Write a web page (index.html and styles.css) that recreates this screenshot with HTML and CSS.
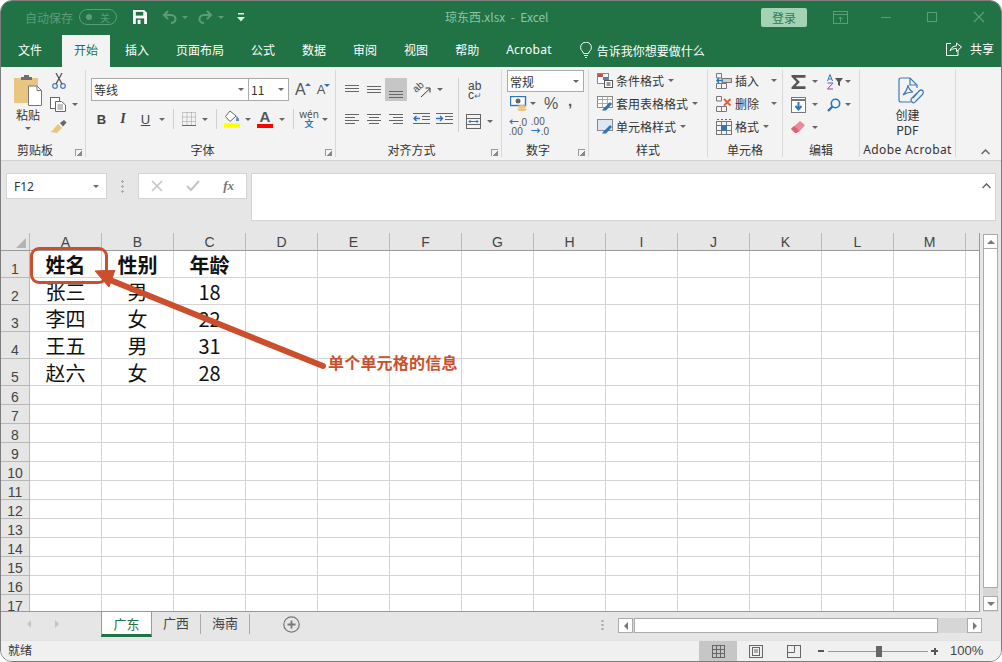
FILE: index.html
```html
<!DOCTYPE html>
<html lang="zh-CN">
<head>
    <meta charset="UTF-8">
    <meta name="viewport" content="width=device-width, initial-scale=1.0">
    <title>琼东西.xlsx - Excel</title>
    <link rel="stylesheet" href="styles.css">
</head>
<body>
    <div class="window">
        <!-- 标题栏 -->
        <div class="titlebar">
            <div class="autosave">自动保存</div>
            <div class="toggle"><span class="toggle-dot"></span><span>关</span></div>
            <svg class="qa-save" width="14" height="14" viewBox="0 0 15 15"><path d="M0 0H12L15 3V15H0Z" fill="#fff"/><rect x="3" y="2" width="8" height="4" fill="#217346"/><rect x="3" y="9" width="9" height="6" fill="#217346"/><rect x="5" y="10.500" width="3" height="4.500" fill="#fff"/></svg>
            <svg class="qa-undo" width="15" height="14" viewBox="0 0 15 14" fill="none" stroke="#5c9c7c" stroke-width="2"><path d="M6 1L2 5L6 9"/><path d="M2 5H9C12 5 13.500 7 13.500 9C13.500 11 12 13 9 13"/></svg>
            <span class="caret dim qa-caret"></span>
            <svg class="qa-redo" width="15" height="14" viewBox="0 0 15 14" fill="none" stroke="#5c9c7c" stroke-width="2"><path d="M9 1L13 5L9 9"/><path d="M13 5H6C3 5 1.500 7 1.500 9C1.500 11 3 13 6 13"/></svg>
            <span class="caret dim qa-caret"></span>
            <svg class="qa-more" width="8" height="9" viewBox="0 0 8 9"><rect x="1" y="0" width="6" height="1.500" fill="#dfeee6"/><path d="M0 4H8L4 8.500Z" fill="#dfeee6"/></svg>
            <div class="doc-title">琼东西.xlsx&nbsp;&nbsp;-&nbsp;&nbsp;Excel</div>
            <div class="login-btn">登录</div>
            <svg class="win-ribbon" width="15" height="13" viewBox="0 0 15 13" fill="none" stroke="#5c9c7c"><rect x="0.500" y="0.500" width="14" height="12"/><path d="M0.500 3.500H14.500M7.500 11V6M5.500 8L7.500 6L9.500 8"/></svg>
            <div class="win-min"></div>
            <div class="win-max"></div>
            <svg class="win-close" width="12" height="12" viewBox="0 0 12 12" stroke="#5c9c7c" stroke-width="1.200"><path d="M1 1L11 11M11 1L1 11"/></svg>
        </div>

        <!-- 选项卡 -->
        <div class="tabs">
            <div class="tab tab-file">文件</div>
            <div class="tab active">开始</div>
            <div class="tab">插入</div>
            <div class="tab">页面布局</div>
            <div class="tab">公式</div>
            <div class="tab">数据</div>
            <div class="tab">审阅</div>
            <div class="tab">视图</div>
            <div class="tab">帮助</div>
            <div class="tab tab-latin">Acrobat</div>
            <svg class="bulb" width="12" height="17" viewBox="0 0 12 17" fill="none" stroke="#fff"><path d="M3.500 11.500C3 9 .6 8.500 .6 5.500A5.400 5.400 0 0 1 11.400 5.500C11.400 8.500 9 9 8.500 11.500Z"/><path d="M4 13.500H8M5 15.500H7"/></svg>
            <div class="tell-me">告诉我你想要做什么</div>
            <svg class="share-icon" width="16" height="15" viewBox="0 0 16 15" fill="none" stroke="#fff"><path d="M5 2.500H.5V14.500H12V9"/><path d="M4 10C4.500 7 7 5 10.500 5V2L15.500 6L10.500 10.500V7.500C8 7.500 5.500 8 4 10Z"/></svg>
            <div class="share">共享</div>
        </div>

        <!-- 功能区 -->
        <div class="ribbon">
            <div class="group g-clip">
                <div class="group-body clip-body">
                    <div class="paste">
                        <svg width="28" height="31" viewBox="0 0 28 31"><rect x="0" y="3" width="24" height="25" fill="#e8c67f"/><path d="M7 5V2H10V0H15V2H18V5Z" fill="#6f6f6f"/><path d="M14.500 11H23L27.500 15.500V30.500H14.500Z" fill="#fff" stroke="#777"/><path d="M23 11V15.500H27.500" fill="none" stroke="#777"/></svg>
                        <div class="paste-text">粘贴</div>
                        <span class="caret"></span>
                    </div>
                    <div class="clip-tools">
                        <svg width="14" height="16" viewBox="0 0 14 16" fill="none" stroke="#4f81bd" stroke-width="1.300"><circle cx="3" cy="13" r="2.300"/><circle cx="11" cy="13" r="2.300"/><path d="M4 11L10 0M10 11L4 0" stroke="#555"/></svg>
                        <div class="clip-copy">
                            <svg width="16" height="15" viewBox="0 0 16 15" fill="#fff" stroke="#666"><rect x="0.500" y="0.500" width="9" height="11"/><path d="M5.500 4.500H11.500L15.500 8V14.500H5.500Z"/><path d="M7.500 8H13M7.500 10H13M7.500 12H13" stroke-width="0.800"/></svg>
                            <span class="caret"></span>
                        </div>
                        <svg width="17" height="14" viewBox="0 0 17 14"><path d="M8 4L12 8L7 13L0 12C3 11 5 7 8 4Z" fill="#e8c67f"/><path d="M10 3L14 0L16.500 2.500L13 6.500Z" fill="#666"/></svg>
                    </div>
                </div>
                <div class="group-label">剪贴板</div>
                <span class="launcher"></span>
            </div>

            <div class="group g-font">
                <div class="group-body">
                    <div class="font-row1">
                        <div class="combo font-name">等线<span class="caret"></span></div>
                        <div class="combo font-size">11<span class="caret"></span></div>
                        <div class="grow-a">A<i class="up"></i></div>
                        <div class="shrink-a">A<i class="down"></i></div>
                    </div>
                    <div class="font-row2">
                        <b class="fmt">B</b>
                        <i class="fmt fmt-i">I</i>
                        <u class="fmt">U</u>
                        <span class="caret"></span>
                        <span class="vsep"></span>
                        <svg width="14" height="14" viewBox="0 0 14 14" fill="none" stroke="#999" stroke-dasharray="1 1"><path d="M.5 .5H13.500V13.500H.5ZM.5 5H13.500M.5 9.500H13.500M5 .5V13.500M9.500 .5V13.500"/><path d="M0 13.500H14" stroke="#666" stroke-dasharray="none"/></svg>
                        <span class="caret"></span>
                        <span class="vsep"></span>
                        <svg width="16" height="18" viewBox="0 0 16 18"><path d="M6 1L12 6L6 11.500L1.500 6.500Z" fill="#fff" stroke="#666"/><path d="M12.500 5.500L15 9V11H12Z" fill="#5b89c2"/><rect x="0" y="13.500" width="16" height="4" fill="#ffff00"/></svg>
                        <span class="caret"></span>
                        <div class="font-color">A</div>
                        <span class="caret"></span>
                        <span class="vsep"></span>
                        <div class="wen">wén<em>文</em></div>
                        <span class="caret"></span>
                    </div>
                </div>
                <div class="group-label">字体</div>
                <span class="launcher"></span>
            </div>

            <div class="group g-align">
                <div class="group-body align-body">
                    <div class="align-left">
                        <div class="align-row1">
                            <svg class="ln" width="14" height="9" viewBox="0 0 14 9"><path d="M0 .5H14M0 3.500H14M0 6.500H14"/></svg>
                            <svg class="ln" width="14" height="9" viewBox="0 0 14 9"><path d="M0 1.500H14M0 4.500H14M0 7.500H14"/></svg>
                            <div class="align-selected"><svg class="ln" width="14" height="9" viewBox="0 0 14 9"><path d="M0 2.500H14M0 5.500H14M0 8.500H14"/></svg></div>
                            <svg class="orient" width="17" height="16" viewBox="0 0 17 16" fill="none"><text x="3" y="11" transform="rotate(-40 3 11)" class="orient-text">ab</text><path d="M8 15L16.500 7M12.500 6H17V10.500" stroke="#333"/></svg>
                            <span class="caret"></span>
                        </div>
                        <div class="align-row2">
                            <svg class="ln" width="14" height="11" viewBox="0 0 14 11"><path d="M0 .5H14M0 3.500H10M0 6.500H14M0 9.500H10"/></svg>
                            <svg class="ln" width="14" height="11" viewBox="0 0 14 11"><path d="M0 .5H14M2 3.500H12M0 6.500H14M2 9.500H12"/></svg>
                            <svg class="ln" width="14" height="11" viewBox="0 0 14 11"><path d="M0 .5H14M4 3.500H14M0 6.500H14M4 9.500H14"/></svg>
                            <svg width="17" height="12" viewBox="0 0 17 12" fill="none" stroke="#666"><path d="M0 .5H17M9 3.500H17M9 6.500H17M0 10.500H17"/><path d="M7 5.500H1M3.500 3L1 5.500L3.500 8" stroke="#2e75b6" stroke-width="1.400"/></svg>
                            <svg width="17" height="12" viewBox="0 0 17 12" fill="none" stroke="#666"><path d="M0 .5H17M9 3.500H17M9 6.500H17M0 10.500H17"/><path d="M0 5.500H6M4 3L6.500 5.500L4 8" stroke="#2e75b6" stroke-width="1.400"/></svg>
                        </div>
                    </div>
                    <span class="vsep tall"></span>
                    <div class="align-right">
                        <div class="wrap-text">ab<br>c<em>↵</em></div>
                        <div class="merge">
                            <svg width="15" height="15" viewBox="0 0 15 15" fill="none" stroke="#666"><rect x=".5" y=".5" width="14" height="14"/><path d="M.5 4.500H14.500M.5 10.500H14.500"/><path d="M3 7.500H12M4.500 6L3 7.500L4.500 9M10.500 6L12 7.500L10.500 9" stroke="#2e75b6"/></svg>
                            <span class="caret"></span>
                        </div>
                    </div>
                </div>
                <div class="group-label">对齐方式</div>
                <span class="launcher"></span>
            </div>

            <div class="group g-num">
                <div class="group-body">
                    <div class="combo num-format">常规<span class="caret"></span></div>
                    <div class="num-row2">
                        <svg width="17" height="16" viewBox="0 0 17 16"><rect x=".5" y=".5" width="15" height="9" fill="#fff" stroke="#2e75b6" stroke-width="1.400"/><circle cx="8" cy="5" r="2.500" fill="#666"/><ellipse cx="12" cy="10.500" rx="4.500" ry="1.500" fill="#e8c67f"/><ellipse cx="12" cy="13.500" rx="4.500" ry="1.500" fill="#e8c67f"/></svg>
                        <span class="caret"></span>
                        <div class="percent">%</div>
                        <div class="comma">,</div>
                    </div>
                    <div class="num-row3">
                        <div class="dec"><em>←</em>.0<br>.00</div>
                        <div class="dec">.00<br><em>→</em>.0</div>
                    </div>
                </div>
                <div class="group-label">数字</div>
                <span class="launcher"></span>
            </div>

            <div class="group g-styles">
                <div class="group-body rows">
                    <div class="cmd">
                        <svg width="16" height="15" viewBox="0 0 16 15"><rect x=".5" y=".5" width="11" height="10" fill="#fff" stroke="#888"/><rect x="1" y="1" width="5" height="3" fill="#c0504d"/><rect x="6" y="4" width="5" height="3" fill="#4f81bd"/><rect x="7.500" y="7.500" width="8" height="7" fill="#fff" stroke="#555"/><path d="M9.500 10H13.500M9.500 12H13.500" stroke="#333"/></svg>
                        <span>条件格式</span><span class="caret"></span>
                    </div>
                    <div class="cmd">
                        <svg width="16" height="15" viewBox="0 0 16 15" fill="none"><rect x=".5" y=".5" width="15" height="11" fill="#fff" stroke="#888"/><path d="M.5 3.500H15.500M.5 7.500H15.500M5.500 .5V11.500M10.500 .5V11.500" stroke="#aaa"/><path d="M6 13L13 6L15 8L9 14.500H5Z" fill="#2e75b6"/></svg>
                        <span>套用表格格式</span><span class="caret"></span>
                    </div>
                    <div class="cmd">
                        <svg width="16" height="15" viewBox="0 0 16 15" fill="none"><rect x=".5" y=".5" width="15" height="11" fill="#dfe7f2" stroke="#888"/><path d="M6 13L13 6L15 8L9 14.500H5Z" fill="#2e75b6"/></svg>
                        <span>单元格样式</span><span class="caret"></span>
                    </div>
                </div>
                <div class="group-label">样式</div>
            </div>

            <div class="group g-cells">
                <div class="group-body rows">
                    <div class="cmd">
                        <svg width="16" height="16" viewBox="0 0 16 16" fill="none" stroke="#777"><path d="M.5 .5H5.500V5H.5ZM.5 10.500H5.500V15.500H.5ZM5.500 10.500H10.500V15.500H5.500Z"/><rect x="6" y="5.500" width="9.500" height="4" fill="#ccc"/><path d="M7 7.500H1M3 5L.8 7.500L3 10" stroke="#2e75b6" stroke-width="1.300"/></svg>
                        <span>插入</span><span class="caret cell-caret"></span>
                    </div>
                    <div class="cmd">
                        <svg width="16" height="16" viewBox="0 0 16 16" fill="none" stroke="#777"><path d="M.5 .5H5.500V5H.5ZM.5 10.500H5.500V15.500H.5ZM5.500 10.500H10.500V15.500H5.500Z"/><path d="M8 3L14.500 9.500M14.500 3L8 9.500" stroke="#d9603b" stroke-width="1.800"/></svg>
                        <span>删除</span><span class="caret cell-caret"></span>
                    </div>
                    <div class="cmd">
                        <svg width="16" height="16" viewBox="0 0 16 16" fill="none" stroke="#777"><rect x=".5" y="2.500" width="15" height="13"/><path d="M.5 6.500H15.500M.5 11.500H15.500M5.500 2.500V15.500M10.500 2.500V15.500"/><rect x="5" y="6.500" width="6" height="5" fill="#2e75b6" stroke="none"/><path d="M1 .5H15" stroke="#2e75b6" stroke-dasharray="2 2"/></svg>
                        <span>格式</span><span class="caret"></span>
                    </div>
                </div>
                <div class="group-label">单元格</div>
            </div>

            <div class="group g-edit">
                <div class="group-body edit-body">
                    <svg width="15" height="14" viewBox="0 0 15 15"><path d="M0 0H15V3H4.500L9 7.500L4.500 12H15V15H0V13L5.500 7.500L0 2Z" fill="#555"/></svg>
                    <span class="caret"></span>
                    <svg width="16" height="16" viewBox="0 0 16 16"><path d="M.5 7L3 .5L5.500 7M1.500 5H4.500" fill="none" stroke="#2e75b6"/><path d="M.5 9H6L.5 15H6" fill="none" stroke="#8e44ad"/><path d="M8 4H16L13 8V12L11 11V8Z" fill="#555"/></svg>
                    <span class="caret"></span>
                    <svg width="15" height="16" viewBox="0 0 15 16" fill="none"><rect x=".5" y=".5" width="14" height="15" fill="#fff" stroke="#777"/><path d="M.5 3H14.500" stroke="#777" stroke-width="2"/><path d="M7.500 5V12M4.500 9L7.500 12.500L10.500 9" stroke="#2e75b6" stroke-width="2"/></svg>
                    <span class="caret"></span>
                    <svg width="14" height="14" viewBox="0 0 14 14" fill="none"><circle cx="8.500" cy="5.500" r="4.200" stroke="#2e75b6" stroke-width="1.600"/><path d="M5.500 8.500L1 13" stroke="#2e75b6" stroke-width="2.400"/></svg>
                    <span class="caret"></span>
                    <svg width="14" height="13" viewBox="0 0 14 13"><path d="M9 0L14 4L8 11H4L0 8Z" fill="#ea8a9c"/><path d="M3 5L8 9.500L6 12H4L0 8Z" fill="#e25d76"/></svg>
                    <span class="caret"></span>
                </div>
                <div class="group-label">编辑</div>
            </div>

            <div class="group g-acro">
                <div class="group-body acro-body">
                    <svg width="26" height="28" viewBox="0 0 26 28" fill="none" stroke="#3f78bd" stroke-width="1.200"><path d="M13 25H3Q1 25 1 23V3Q1 1 3 1H12L19 8V11"/><path d="M12 1V8H19"/><path d="M5 18C8 15 10 10 10 8C10 10 12 14 15 15C12 15 8 16 5 18Z"/><path d="M15 21L21 14Q23 12 25 14Q26 16 24 18L18 24Q16 27 14 25Q12 23 14 21L19 16"/></svg>
                    <div class="acro-text">创建<br>PDF</div>
                </div>
                <div class="group-label acro-label">Adobe Acrobat</div>
            </div>

            <svg class="collapse" width="9" height="6" viewBox="0 0 9 6" fill="none" stroke="#666" stroke-width="1.500"><path d="M.5 5L4.500 1L8.500 5"/></svg>
        </div>

        <!-- 编辑栏 -->
        <div class="formula-area">
            <div class="name-box">F12<span class="caret"></span></div>
            <div class="dots"></div>
            <div class="fx-box">
                <svg width="12" height="12" viewBox="0 0 12 12" stroke="#c4c4c4" stroke-width="1.500"><path d="M1 1L11 11M11 1L1 11"/></svg>
                <svg width="14" height="12" viewBox="0 0 14 12" fill="none" stroke="#c4c4c4" stroke-width="2"><path d="M1 6L5 10L13 1"/></svg>
                <span class="fx">fx</span>
            </div>
            <div class="formula-input">
                <svg class="formula-chevron" width="9" height="6" viewBox="0 0 9 6" fill="none" stroke="#666" stroke-width="1.500"><path d="M.5 5L4.500 1L8.500 5"/></svg>
            </div>
        </div>

        <!-- 工作表 -->
        <div class="sheet">
            <div class="grid">
                <div class="col-heads">
                    <div class="corner"><span class="corner-tri"></span></div>
                    <div class="col-head">A</div>
                    <div class="col-head">B</div>
                    <div class="col-head">C</div>
                    <div class="col-head">D</div>
                    <div class="col-head">E</div>
                    <div class="col-head">F</div>
                    <div class="col-head">G</div>
                    <div class="col-head">H</div>
                    <div class="col-head">I</div>
                    <div class="col-head">J</div>
                    <div class="col-head">K</div>
                    <div class="col-head">L</div>
                    <div class="col-head">M</div>
                </div>
                <div class="rows-wrap">
                    <div class="row tall-row head-row"><div class="row-no">1</div><div class="cell">姓名</div><div class="cell">性别</div><div class="cell">年龄</div></div>
                    <div class="row tall-row"><div class="row-no">2</div><div class="cell">张三</div><div class="cell">男</div><div class="cell">18</div></div>
                    <div class="row tall-row"><div class="row-no">3</div><div class="cell">李四</div><div class="cell">女</div><div class="cell">22</div></div>
                    <div class="row tall-row"><div class="row-no">4</div><div class="cell">王五</div><div class="cell">男</div><div class="cell">31</div></div>
                    <div class="row tall-row"><div class="row-no">5</div><div class="cell">赵六</div><div class="cell">女</div><div class="cell">28</div></div>
                    <div class="row"><div class="row-no">6</div></div>
                    <div class="row"><div class="row-no">7</div></div>
                    <div class="row"><div class="row-no">8</div></div>
                    <div class="row"><div class="row-no">9</div></div>
                    <div class="row"><div class="row-no">10</div></div>
                    <div class="row"><div class="row-no">11</div></div>
                    <div class="row"><div class="row-no">12</div></div>
                    <div class="row"><div class="row-no">13</div></div>
                    <div class="row"><div class="row-no">14</div></div>
                    <div class="row"><div class="row-no">15</div></div>
                    <div class="row"><div class="row-no">16</div></div>
                    <div class="row"><div class="row-no">17</div></div>
                </div>
            </div>
            <div class="vscroll">
                <div class="sb-btn"><span class="tri-up"></span></div>
                <div class="vthumb"></div>
                <div class="sb-btn"><span class="tri-down"></span></div>
            </div>
        </div>

        <!-- 工作表标签 -->
        <div class="sheet-bar">
            <div class="sheet-nav"><span class="nav-left"></span><span class="nav-right"></span></div>
            <div class="sheet-tab current">广东</div>
            <div class="sheet-tab">广西</div>
            <div class="sheet-tab">海南</div>
            <svg class="add-sheet" width="17" height="17" viewBox="0 0 17 17" fill="none" stroke="#777"><circle cx="8.500" cy="8.500" r="7.700" stroke-width="1.200"/><path d="M4.500 8.500H12.500M8.500 4.500V12.500" stroke-width="1.800"/></svg>
            <div class="bar-dots"></div>
            <div class="hscroll">
                <div class="sb-btn"><span class="tri-left"></span></div>
                <div class="hthumb"></div>
                <div class="sb-btn"><span class="tri-right"></span></div>
            </div>
        </div>

        <!-- 状态栏 -->
        <div class="statusbar">
            <div class="ready">就绪</div>
            <div class="view-btn selected">
                <svg width="13" height="13" viewBox="0 0 13 13" fill="none" stroke="#666"><rect x=".5" y=".5" width="12" height="12"/><path d="M.5 4.500H12.500M.5 8.500H12.500M4.500 .5V12.500M8.500 .5V12.500"/></svg>
            </div>
            <div class="view-btn">
                <svg width="14" height="13" viewBox="0 0 14 13" fill="none" stroke="#666"><rect x=".5" y=".5" width="13" height="12"/><rect x="3.500" y="2.500" width="7" height="8"/><path d="M5 5H9M5 7H9"/></svg>
            </div>
            <div class="view-btn">
                <svg width="14" height="13" viewBox="0 0 14 13" fill="none" stroke="#666"><rect x=".5" y=".5" width="13" height="12"/><path d="M.5 7.500H7.500V.5"/></svg>
            </div>
            <div class="zoom-minus"></div>
            <div class="zoom-track"><span class="zoom-thumb"></span></div>
            <div class="zoom-plus"></div>
            <div class="zoom-level">100%</div>
        </div>

        <!-- 标注 -->
        <div class="cell-mark"></div>
        <svg class="arrow" width="330" height="100" viewBox="0 0 330 100">
            <path d="M321 96L108 10" stroke="#cb4f2d" stroke-width="6" stroke-linecap="round"/>
            <path d="M93 1L113 0L107 17Z" fill="#cb4f2d" stroke="#cb4f2d" stroke-linejoin="round"/>
        </svg>
        <div class="note">单个单元格的信息</div>
    </div>
</body>
</html>
```

FILE: styles.css
```css
* {
    margin: 0;
    padding: 0;
    box-sizing: border-box;
    font-family: "Noto Sans CJK SC", "Noto Sans", sans-serif;
}

body {
    background-color: #fff;
    color: #333;
    font-size: 12px;
}

.window {
    width: 1002px;
    height: 662px;
    position: relative;
    display: flex;
    flex-direction: column;
    overflow: hidden;
    background-color: #e6e6e6;
    border: 1px solid #7d7d7d;
    border-radius: 12px;
}

.caret {
    display: inline-block;
    width: 0;
    height: 0;
    flex: none;
    border-left: 3px solid transparent;
    border-right: 3px solid transparent;
    border-top: 3px solid #666;
}

.caret.dim {
    border-top-color: #5c9c7c;
}

em {
    font-style: normal;
}

/* title bar */
.titlebar {
    height: 32px;
    flex: none;
    position: relative;
    display: flex;
    align-items: center;
    background-color: #217346;
    color: #5c9c7c;
}

.autosave {
    margin-left: 24px;
}

.toggle {
    width: 38px;
    height: 16px;
    margin-left: 6px;
    padding: 0 6px 0 6px;
    display: flex;
    align-items: center;
    justify-content: space-between;
    border: 1px solid #5c9c7c;
    border-radius: 8px;
    font-size: 10px;
}

.toggle-dot {
    width: 6px;
    height: 6px;
    border-radius: 50%;
    background-color: #5c9c7c;
}

.qa-save {
    margin-left: 16px;
}

.qa-undo {
    margin-left: 15px;
}

.qa-caret {
    margin-left: 5px;
}

.qa-redo {
    margin-left: 10px;
}

.qa-more {
    margin-left: 13px;
}

.doc-title {
    position: absolute;
    left: 444px;
    top: 7px;
    font-size: 12px;
    line-height: 18px;
    color: #8cc3a5;
    white-space: nowrap;
}

.login-btn {
    width: 46px;
    height: 19px;
    margin-left: auto;
    text-align: center;
    line-height: 19px;
    border-radius: 2px;
    background-color: #a3d2b5;
    color: #2d7d55;
}

.win-ribbon {
    margin-left: 26px;
}

.win-min {
    width: 10px;
    height: 1px;
    margin-left: 33px;
    background-color: #5c9c7c;
}

.win-max {
    width: 10px;
    height: 10px;
    margin-left: 36px;
    border: 1px solid #5c9c7c;
}

.win-close {
    margin-left: 36px;
    margin-right: 16px;
}

/* tabs */
.tabs {
    height: 34px;
    flex: none;
    padding-left: 5px;
    display: flex;
    align-items: center;
    gap: 3px;
    background-color: #217346;
    color: #fff;
}

.tab {
    height: 32px;
    margin-top: 2px;
    padding: 0 12px;
    line-height: 30px;
    font-size: 12px;
}

.tab-file {
    margin-right: 5px;
}

.tab-latin {
    font-family: "Noto Sans", sans-serif;
    letter-spacing: 0.25px;
}

.tab.active {
    background-color: #f3f3f3;
    color: #217346;
}

.bulb {
    margin-left: 13px;
}

.tell-me {
    margin-left: 2px;
}

.share-icon {
    margin-left: auto;
    margin-bottom: 3px;
}

.share {
    margin-left: 5px;
    margin-right: 7px;
    margin-bottom: 3px;
}

/* ribbon */
.ribbon {
    height: 94px;
    flex: none;
    position: relative;
    display: flex;
    align-items: flex-start;
    padding-top: 3px;
    background-color: #f3f3f3;
    border-bottom: 1px solid #d2d2d2;
}

.group {
    height: 87px;
    flex: none;
    position: relative;
    display: flex;
    flex-direction: column;
    border-right: 1px solid #d8d8d8;
}

.group-body {
    height: 73px;
}

.group-label {
    height: 14px;
    line-height: 14px;
    text-align: center;
}

.g-clip .group-label {
    padding-right: 16px;
}

.g-font .group-label {
    padding-right: 16px;
}

.g-align .group-label {
    padding-right: 14px;
}

.g-num .group-label {
    padding-right: 14px;
}

.launcher {
    position: absolute;
    right: 3px;
    bottom: 1px;
    width: 7px;
    height: 7px;
    border-left: 1px solid #999;
    border-top: 1px solid #999;
    background: linear-gradient(135deg, transparent 55%, #888 55%);
}

.vsep {
    width: 1px;
    height: 20px;
    background-color: #d0d0d0;
}

.vsep.tall {
    height: 54px;
    margin-top: 8px;
}

.combo {
    height: 23px;
    display: flex;
    align-items: center;
    justify-content: space-between;
    padding: 0 4px 0 2px;
    background-color: #fff;
    border: 1px solid #ababab;
}

.rows {
    display: flex;
    flex-direction: column;
}

.cmd {
    height: 23px;
    padding-bottom: 2px;
    display: flex;
    align-items: center;
    gap: 3px;
    padding-left: 8px;
}

.cmd .caret {
    margin-left: 1px;
}

.cmd .cell-caret {
    margin-left: 9px;
}

/* clipboard */
.g-clip {
    width: 85px;
}

.clip-body {
    display: flex;
    padding-left: 13px;
}

.paste {
    width: 28px;
    padding-top: 5px;
    display: flex;
    flex-direction: column;
    align-items: center;
}

.paste-text {
    line-height: 16px;
    margin-top: 1px;
    margin-bottom: 4px;
}

.clip-tools {
    margin-left: 8px;
    padding-top: 3px;
    display: flex;
    flex-direction: column;
    gap: 8px;
}

.clip-tools > svg:first-child {
    margin-left: 2px;
}

.clip-copy {
    display: flex;
    align-items: center;
    gap: 6px;
}

/* font */
.g-font {
    width: 250px;
}

.g-font .group-body {
    padding-left: 5px;
}

.font-row1 {
    margin-top: 8px;
    display: flex;
    align-items: center;
}

.font-name {
    width: 158px;
    font-size: 12px;
}

.font-size {
    width: 41px;
    margin-left: -1px;
    font-size: 12px;
}

.grow-a,
.shrink-a {
    position: relative;
    font-family: "Liberation Sans", sans-serif;
    color: #555;
}

.grow-a {
    margin-left: 6px;
    font-size: 16px;
}

.shrink-a {
    margin-left: 11px;
    font-size: 13px;
}

.up,
.down {
    position: absolute;
    right: -5px;
    top: 2px;
    width: 0;
    height: 0;
    border-left: 3px solid transparent;
    border-right: 3px solid transparent;
}

.up {
    border-bottom: 3px solid #2e75b6;
}

.down {
    border-top: 3px solid #2e75b6;
}

.font-row2 {
    height: 20px;
    margin-top: 8px;
    display: grid;
    grid-template-columns: 21px 22px 23px 10px 13px 17px 16px 6px 26px 6px 28px 6px 16px 16px 16px;
    align-items: center;
    justify-items: center;
}

.fmt {
    font-family: "Liberation Sans", sans-serif;
    font-size: 13px;
    color: #444;
}

.fmt-i {
    font-family: "Liberation Serif", serif;
    font-size: 14px;
    font-weight: 700;
}

.font-color {
    width: 16px;
    height: 18px;
    line-height: 14px;
    text-align: center;
    font-family: "Liberation Sans", sans-serif;
    font-size: 15px;
    font-weight: 700;
    color: #555;
    border-bottom: 4px solid #f00;
}

.wen {
    line-height: 10px;
    text-align: center;
    font-size: 10px;
    font-family: "Noto Sans", sans-serif;
    color: #555;
}

.wen em {
    display: block;
    font-family: "Noto Sans CJK SC", sans-serif;
    font-size: 9px;
    font-weight: 700;
    color: #2e75b6;
}

/* alignment */
.g-align {
    width: 166px;
}

.align-body {
    display: flex;
    padding-left: 5px;
}

.ln {
    fill: none;
    stroke: #666;
}

.align-left {
    width: 117px;
}

.align-row1 {
    height: 23px;
    margin-top: 8px;
    display: grid;
    grid-template-columns: 22px 22px 22px 28px 10px;
    align-items: center;
    justify-items: center;
}

.align-selected {
    width: 22px;
    height: 23px;
    display: flex;
    align-items: flex-end;
    justify-content: center;
    padding-bottom: 3px;
    background-color: #c6c6c6;
}

.orient {
    overflow: visible;
}

.orient-text {
    font-family: "Liberation Sans", sans-serif;
    font-size: 10px;
    fill: #444;
}

.align-row2 {
    height: 20px;
    margin-top: 8px;
    display: grid;
    grid-template-columns: 22px 22px 22px 29px 16px;
    align-items: center;
    justify-items: center;
}

.align-right {
    margin-left: 7px;
    display: flex;
    flex-direction: column;
    align-items: flex-start;
}

.wrap-text {
    margin-top: 12px;
    margin-left: 2px;
    font-size: 12px;
    line-height: 9px;
    font-family: "Liberation Sans", sans-serif;
    color: #444;
}

.wrap-text em {
    font-size: 9px;
    color: #2e75b6;
}

.merge {
    margin-top: 14px;
    display: flex;
    align-items: center;
    gap: 6px;
}

/* number */
.g-num {
    width: 87px;
}

.g-num .group-body {
    padding-left: 5px;
}

.num-format {
    width: 77px;
    height: 22px;
}

.num-row2 {
    height: 23px;
    display: grid;
    grid-template-columns: 22px 8px 28px 10px;
    align-items: center;
    justify-items: center;
}

.percent {
    font-family: "Liberation Sans", sans-serif;
    font-size: 16px;
    color: #555;
}

.comma {
    font-family: "Liberation Sans", sans-serif;
    font-size: 15px;
    font-weight: 700;
    line-height: 10px;
    padding-bottom: 6px;
    color: #555;
}

.num-row3 {
    height: 23px;
    display: grid;
    grid-template-columns: 22px 22px;
    justify-items: center;
    align-items: center;
}

.dec {
    font-family: "Liberation Sans", sans-serif;
    font-size: 10px;
    line-height: 9px;
    color: #555;
}

.dec em {
    color: #2e75b6;
    font-weight: 700;
}

/* styles, cells, editing */
.g-styles {
    width: 119px;
}

.g-cells {
    width: 75px;
}

.g-edit {
    width: 77px;
}

.edit-body {
    display: grid;
    grid-template-columns: 21px 15px 18px 10px;
    grid-auto-rows: 23px;
    padding-left: 8px;
    align-items: center;
    justify-items: start;
}

.g-acro {
    width: 96px;
}

.acro-body {
    padding-top: 7px;
    display: flex;
    flex-direction: column;
    align-items: center;
}

.acro-body svg {
    margin-left: 6px;
}

.acro-text {
    text-align: center;
    line-height: 15px;
    margin-top: 2px;
    color: #333;
}

.acro-label {
    white-space: nowrap;
    font-family: "Noto Sans", sans-serif;
    letter-spacing: 0.4px;
}

.collapse {
    position: absolute;
    right: 11px;
    bottom: 5px;
}

/* formula bar */
.formula-area {
    height: 72px;
    flex: none;
    padding: 12px 0 0 5px;
    display: flex;
    align-items: flex-start;
    background-color: #e6e6e6;
}

.name-box {
    width: 101px;
    height: 26px;
    padding: 0 7px;
    display: flex;
    align-items: center;
    justify-content: space-between;
    background-color: #fff;
    border: 1px solid #d4d4d4;
    font-family: "Noto Sans", sans-serif;
    font-size: 12px;
}

.dots {
    width: 31px;
    height: 14px;
    margin-top: 6px;
    background: radial-gradient(circle, #aaa 1px, transparent 1.300px) center top / 3px 5px repeat-y;
}

.fx-box {
    width: 109px;
    height: 26px;
    display: flex;
    align-items: center;
    justify-content: space-between;
    padding: 0 12px;
    background-color: #fff;
    border: 1px solid #d4d4d4;
}

.fx {
    font-family: "Liberation Serif", serif;
    font-style: italic;
    font-weight: 700;
    font-size: 13px;
    color: #777;
}

.formula-input {
    width: 745px;
    height: 48px;
    margin-left: 4px;
    position: relative;
    background-color: #fff;
    border: 1px solid #d4d4d4;
}

.formula-chevron {
    position: absolute;
    right: 4px;
    top: 9px;
}

/* sheet */
.sheet {
    height: 379px;
    flex: none;
    display: flex;
}

.grid {
    width: 979px;
    border-right: 1px solid #9a9a9a;
    border-bottom: 1px solid #9a9a9a;
    overflow: hidden;
}

.col-heads {
    height: 18px;
    display: flex;
    border-bottom: 1px solid #9a9a9a;
}

.corner {
    width: 29px;
    position: relative;
    border-right: 1px solid #b8b8b8;
}

.corner-tri {
    position: absolute;
    right: 3px;
    bottom: 2px;
    width: 0;
    height: 0;
    border-left: 10px solid transparent;
    border-bottom: 10px solid #b4b4b4;
}

.col-head {
    width: 72px;
    padding-top: 1px;
    line-height: 17px;
    text-align: center;
    font-family: "Liberation Sans", sans-serif;
    font-size: 14px;
    color: #444;
    border-right: 1px solid #b8b8b8;
}

.rows-wrap {
    height: 360px;
    background-color: #fff;
    background-image: linear-gradient(to right, transparent 71px, #d4d4d4 71px);
    background-size: 72px 100%;
    background-position: 29px 0;
}

.row {
    height: 19px;
    display: flex;
    border-bottom: 1px solid #d4d4d4;
}

.tall-row {
    height: 27px;
}

.row-no {
    width: 29px;
    flex: none;
    padding-top: 3px;
    text-align: center;
    font-family: "Liberation Sans", sans-serif;
    font-size: 14px;
    line-height: 17px;
    color: #444;
    background-color: #e6e6e6;
    border-right: 1px solid #b8b8b8;
    border-bottom: 1px solid #b8b8b8;
    margin-bottom: -1px;
}

.tall-row .row-no {
    padding-top: 10px;
}

.cell {
    width: 72px;
    padding-top: 1px;
    padding-right: 1px;
    text-align: center;
    font-size: 20px;
    line-height: 26px;
    color: #111;
}

.head-row .cell {
    font-weight: 700;
}

/* scrollbars */
.vscroll {
    width: 15px;
    height: 378px;
    margin-left: 3px;
    margin-top: 1px;
    display: flex;
    flex-direction: column;
    background-color: #d6d6d6;
}

.sb-btn {
    width: 15px;
    height: 15px;
    flex: none;
    display: flex;
    align-items: center;
    justify-content: center;
    background-color: #fff;
    border: 1px solid #ababab;
}

.vthumb {
    height: 339px;
    flex: none;
    margin-bottom: 8px;
    background-color: #fff;
    border: 1px solid #ababab;
    border-top: none;
}

.tri-up,
.tri-down {
    width: 0;
    height: 0;
    border-left: 4px solid transparent;
    border-right: 4px solid transparent;
}

.tri-up {
    border-bottom: 4px solid #777;
}

.tri-down {
    border-top: 4px solid #777;
}

.tri-left,
.tri-right {
    width: 0;
    height: 0;
    border-top: 4px solid transparent;
    border-bottom: 4px solid transparent;
}

.tri-left {
    border-right: 4px solid #777;
}

.tri-right {
    border-left: 4px solid #777;
}

/* sheet tabs */
.sheet-bar {
    height: 28px;
    flex: none;
    display: flex;
    align-items: flex-start;
    background-color: #e6e6e6;
}

.sheet-nav {
    width: 100px;
    height: 24px;
    display: flex;
    align-items: center;
    padding-left: 26px;
    gap: 24px;
}

.nav-left {
    width: 0;
    height: 0;
    border-top: 4px solid transparent;
    border-bottom: 4px solid transparent;
    border-right: 4px solid #c4c4c4;
}

.nav-right {
    width: 0;
    height: 0;
    border-top: 4px solid transparent;
    border-bottom: 4px solid transparent;
    border-left: 4px solid #c4c4c4;
}

.sheet-tab {
    width: 49px;
    height: 20px;
    margin-top: 2px;
    text-align: center;
    line-height: 18px;
    font-size: 13px;
    color: #444;
    border-right: 1px solid #aaa;
}

.sheet-tab.current {
    width: 51px;
    height: 25px;
    margin-top: 0;
    line-height: 23px;
    color: #217346;
    background-color: #fff;
    border-left: 1px solid #9a9a9a;
    border-right: 1px solid #9a9a9a;
    border-bottom: 3px solid #217346;
}

.add-sheet {
    margin-left: 33px;
    margin-top: 4px;
}

.bar-dots {
    width: 3px;
    height: 12px;
    margin-left: 301px;
    margin-top: 7px;
    background: radial-gradient(circle, #aaa 1px, transparent 1.300px) center top / 3px 4px repeat-y;
}

.hscroll {
    width: 364px;
    height: 15px;
    margin-left: 14px;
    margin-top: 6px;
    display: flex;
    background-color: #d6d6d6;
}

.hthumb {
    width: 305px;
    margin-left: 1px;
    margin-right: 29px;
    background-color: #fff;
    border: 1px solid #ababab;
}

/* status bar */
.statusbar {
    height: 21px;
    flex: none;
    display: flex;
    align-items: center;
    background-color: #f0f0f0;
    border-top: 1px solid #e2e2e2;
}

.ready {
    width: 698px;
    padding-left: 7px;
    padding-bottom: 3px;
}

.view-btn {
    width: 38px;
    height: 20px;
    display: flex;
    align-items: center;
    justify-content: center;
}

.view-btn.selected {
    background-color: #c6c6c6;
}

.zoom-minus,
.zoom-plus {
    position: relative;
    width: 6px;
    height: 2px;
    background-color: #555;
}

.zoom-minus {
    margin-left: 5px;
}

.zoom-plus {
    width: 7px;
    margin-left: 3px;
}

.zoom-plus::after {
    content: "";
    position: absolute;
    left: 2.500px;
    top: -2.500px;
    width: 2px;
    height: 7px;
    background-color: #555;
}

.zoom-track {
    width: 100px;
    height: 1px;
    margin-left: 4px;
    position: relative;
    background-color: #999;
}

.zoom-thumb {
    position: absolute;
    left: 48px;
    top: -5px;
    width: 6px;
    height: 11px;
    background-color: #666;
}

.zoom-level {
    margin-left: 12px;
    padding-bottom: 2px;
    font-family: "Liberation Sans", sans-serif;
    font-size: 13px;
    color: #444;
}

/* annotation */
.cell-mark {
    position: absolute;
    left: 29px;
    top: 246px;
    width: 78px;
    height: 37px;
    border: 3.500px solid #cb4f2d;
    border-radius: 9px;
}

.arrow {
    position: absolute;
    left: 1px;
    top: 269px;
}

.note {
    position: absolute;
    left: 327px;
    top: 350px;
    font-size: 16px;
    line-height: 22px;
    font-weight: 700;
    letter-spacing: 0.2px;
    color: #c9502e;
    text-shadow: 0 0 2px #fff;
    white-space: nowrap;
}
```
